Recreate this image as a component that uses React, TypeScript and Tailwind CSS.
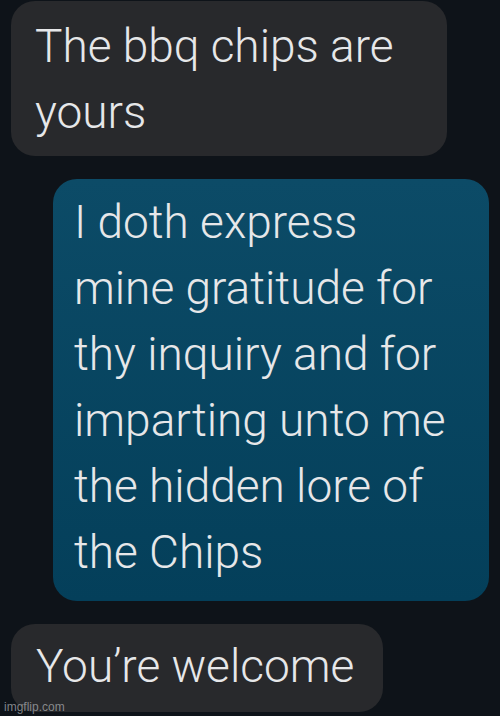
import React from "react";

export default function App() {
  const font = { fontFamily: "Roboto, 'Noto Sans', sans-serif" };
  return (
    <div
      className="relative h-[716px] w-[500px] overflow-hidden bg-[#0e1319] text-[#e6e7e9]"
      style={font}
    >
      <div className="flex flex-col pt-px font-[350]">
        <div className="ml-[11px] w-[436px] rounded-[24px] bg-[#28292c] pl-[24px] pr-4 pt-[12px] pb-[11px] text-[46px] leading-[66px]">
          <div>The bbq chips are</div>
          <div>yours</div>
        </div>
        <div className="ml-[53px] mt-[23px] w-[436px] rounded-[24px] bg-gradient-to-b from-[#0c4b67] to-[#043f5a] pl-[21px] pr-4 pt-[10px] pb-[16px] text-[46px] leading-[66px]">
          <div>I doth express</div>
          <div>mine gratitude for</div>
          <div>thy inquiry and for</div>
          <div>imparting unto me</div>
          <div>the hidden lore of</div>
          <div>the Chips</div>
        </div>
        <div className="ml-[11px] mt-[23px] w-[372px] rounded-[24px] bg-[#28292c] pl-[25px] pt-[9px] pb-[13px] text-[46px] leading-[66px]">
          <div>You’re welcome</div>
        </div>
      </div>
      <div
        className="absolute bottom-[2px] left-[4px] text-[12px] leading-[14px] text-[#a0a2a5]/80"
        style={{ fontFamily: "'Liberation Sans', Arial, sans-serif" }}
      >
        imgflip.com
      </div>
    </div>
  );
}
